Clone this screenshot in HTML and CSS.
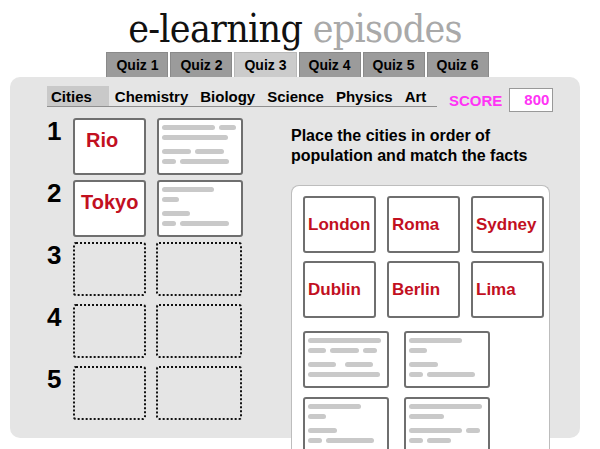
FILE: index.html
```html
<!DOCTYPE html>
<html lang="en">
<head>
    <meta charset="UTF-8">
    <meta name="viewport" content="width=device-width, initial-scale=1.0">
    <title>e-learning episodes</title>
    <link rel="stylesheet" href="styles.css">
</head>
<body>
    <div class="page">
        <h1 class="title">e-learning <span class="light">episodes</span></h1>

        <div class="quiz-tabs">
            <div class="tab">Quiz 1</div>
            <div class="tab">Quiz 2</div>
            <div class="tab active">Quiz 3</div>
            <div class="tab">Quiz 4</div>
            <div class="tab">Quiz 5</div>
            <div class="tab">Quiz 6</div>
        </div>

        <div class="panel">
            <div class="topbar">
                <div class="subjects">
                    <span class="subject current">Cities</span>
                    <span class="subject">Chemistry</span>
                    <span class="subject">Biology</span>
                    <span class="subject">Science</span>
                    <span class="subject">Physics</span>
                    <span class="subject">Art</span>
                </div>
                <div class="score">
                    <span class="score-label">SCORE</span>
                    <span class="score-box">800</span>
                </div>
            </div>

            <div class="content">
                <!-- answer slots -->
                <div class="answers">
                    <div class="row">
                        <span class="num">1</span>
                        <div class="card city indent">Rio</div>
                        <div class="card facts">
                            <div class="grp">
                                <div class="line"><i class="w53"></i><i class="w17"></i></div>
                                <div class="line"><i class="w66"></i></div>
                            </div>
                            <div class="grp">
                                <div class="line"><i class="w29"></i><i class="w29"></i></div>
                                <div class="line"><i class="w14"></i><i class="w49"></i></div>
                            </div>
                        </div>
                    </div>
                    <div class="row">
                        <span class="num">2</span>
                        <div class="card city">Tokyo</div>
                        <div class="card facts">
                            <div class="grp">
                                <div class="line"><i class="w52"></i></div>
                                <div class="line"><i class="w17"></i></div>
                            </div>
                            <div class="grp">
                                <div class="line"><i class="w28"></i></div>
                                <div class="line"><i class="w14"></i><i class="w49"></i></div>
                            </div>
                        </div>
                    </div>
                    <div class="row">
                        <span class="num">3</span>
                        <div class="slot city-slot"></div>
                        <div class="slot facts-slot"></div>
                    </div>
                    <div class="row">
                        <span class="num">4</span>
                        <div class="slot city-slot"></div>
                        <div class="slot facts-slot"></div>
                    </div>
                    <div class="row">
                        <span class="num">5</span>
                        <div class="slot city-slot"></div>
                        <div class="slot facts-slot"></div>
                    </div>
                </div>

                <!-- pieces to drag -->
                <div class="pool-area">
                    <p class="prompt">Place the cities in order of<br>population and match the facts</p>
                    <div class="pool">
                        <div class="pool-cities">
                            <div class="card city small">London</div>
                            <div class="card city small">Roma</div>
                            <div class="card city small">Sydney</div>
                            <div class="card city small">Dublin</div>
                            <div class="card city small">Berlin</div>
                            <div class="card city small">Lima</div>
                        </div>
                        <div class="pool-facts">
                            <div class="card facts">
                                <div class="grp">
                                    <div class="line"><i class="w73"></i></div>
                                    <div class="line"><i class="w18"></i><i class="w29"></i><i class="w14"></i></div>
                                </div>
                                <div class="grp">
                                    <div class="line"><i class="w28"></i><i class="w28 apart"></i></div>
                                    <div class="line"><i class="w72"></i></div>
                                </div>
                            </div>
                            <div class="card facts">
                                <div class="grp">
                                    <div class="line"><i class="w53"></i></div>
                                    <div class="line"><i class="w18"></i></div>
                                </div>
                                <div class="grp">
                                    <div class="line"><i class="w29"></i></div>
                                    <div class="line"><i class="w14"></i><i class="w48"></i></div>
                                </div>
                            </div>
                            <div class="card facts">
                                <div class="grp">
                                    <div class="line"><i class="w53"></i></div>
                                    <div class="line"><i class="w18"></i></div>
                                </div>
                                <div class="grp">
                                    <div class="line"><i class="w29"></i></div>
                                    <div class="line"><i class="w14"></i><i class="w48"></i></div>
                                </div>
                            </div>
                            <div class="card facts">
                                <div class="grp">
                                    <div class="line"><i class="w73"></i></div>
                                    <div class="line"><i class="w35"></i></div>
                                </div>
                                <div class="grp">
                                    <div class="line"><i class="w53"></i><i class="w14"></i></div>
                                    <div class="line"><i class="w14"></i><i class="w24"></i></div>
                                </div>
                            </div>
                        </div>
                    </div>
                </div>
            </div>
        </div>
    </div>
</body>
</html>
```

FILE: styles.css
```css
body {
    margin: 0;
    background: #fff;
    font-family: "Liberation Sans", Arial, sans-serif;
    color: #000;
}
.page {
    width: 570px;
    height: 449px;
    margin-left: 10px;
    overflow: hidden;
}

/* header */
.title {
    margin: 0;
    padding-top: 6px;
    height: 46px;
    line-height: 46px;
    text-align: center;
    font-family: "DejaVu Serif Condensed", "DejaVu Serif", serif;
    font-size: 39px;
    font-weight: normal;
    letter-spacing: -0.7px;
    color: #111;
}
.title .light {
    color: #a9a9a9;
}
.quiz-tabs {
    display: flex;
    justify-content: center;
    gap: 2px;
    padding-left: 5px;
    height: 25px;
}
.tab {
    padding: 0 9px;
    line-height: 24px;
    font-size: 14px;
    font-weight: bold;
    background: #9b9b9b;
    border: 1px solid #8a8a8a;
    border-bottom: none;
}
.tab.active {
    background: #cbcbcb;
    border-color: #b9b9b9;
}

/* main panel */
.panel {
    height: 361px;
    box-sizing: border-box;
    padding: 9px 0 0 37px;
    background: #e5e5e5;
    border-radius: 10px;
}
.topbar {
    display: flex;
    align-items: flex-start;
    height: 21px;
}
.subjects {
    display: flex;
    width: 390px;
    height: 21px;
    border-bottom: 1px solid #8f8f8f;
    box-sizing: border-box;
}
.subject {
    padding: 0 6px;
    line-height: 21px;
    font-size: 15px;
    font-weight: bold;
}
.subject.current {
    padding: 0 17px 0 4px;
    background: #c9c9c9;
}
.score {
    display: flex;
    align-items: center;
    margin-left: 12px;
    margin-top: 2px;
    font-size: 15px;
    font-weight: bold;
    color: #ff33f5;
}
.score-box {
    width: 44px;
    height: 24px;
    line-height: 22px;
    margin-left: 7px;
    padding-right: 3px;
    box-sizing: border-box;
    text-align: right;
    background: #fff;
    border: 1px solid #999;
}

.content {
    display: flex;
    margin-top: 11px;
}

/* answer rows */
.answers {
    display: flex;
    flex-direction: column;
    gap: 5px;
    width: 196px;
}
.row {
    display: flex;
    align-items: flex-start;
    height: 57px;
}
.num {
    width: 26px;
    font-size: 26px;
    line-height: 26px;
    font-weight: bold;
}

/* cards */
.card {
    box-sizing: border-box;
    height: 57px;
    background: #fff;
    border: 2px solid #6f6f6f;
    border-radius: 3px;
}
.city {
    width: 73px;
    padding: 8px 0 0 6px;
    font-size: 20px;
    line-height: 24px;
    font-weight: bold;
    color: #c2101f;
}
.city.indent {
    padding-left: 11px;
}
.city.small {
    display: flex;
    align-items: center;
    padding: 0 0 0 3px;
    font-size: 17px;
}
.facts {
    width: 86px;
    margin-left: 11px;
    padding: 5px 3px 0;
}
.grp + .grp {
    margin-top: 9px;
}
.line {
    display: flex;
    gap: 4px;
    height: 5px;
}
.line + .line {
    margin-top: 5px;
}
.line i {
    display: block;
    height: 5px;
    border-radius: 3px;
    background: #c9c9c9;
}
.line i.apart {
    margin-left: 5px;
}
.w14 { width: 14px; }
.w17 { width: 17px; }
.w18 { width: 18px; }
.w24 { width: 24px; }
.w28 { width: 28px; }
.w29 { width: 29px; }
.w35 { width: 35px; }
.w48 { width: 48px; }
.w49 { width: 49px; }
.w52 { width: 52px; }
.w53 { width: 53px; }
.w66 { width: 66px; }
.w72 { width: 72px; }
.w73 { width: 73px; }

.slot {
    box-sizing: border-box;
    height: 54px;
    border: 2px dotted #111;
    border-radius: 3px;
}
.city-slot {
    width: 73px;
}
.facts-slot {
    width: 86px;
    margin-left: 10px;
}

/* right side */
.pool-area {
    margin-left: 48px;
    width: 259px;
}
.prompt {
    margin: 8px 0 0;
    font-size: 16px;
    line-height: 20px;
    font-weight: bold;
}
.pool {
    margin-top: 19px;
    height: 264px;
    box-sizing: border-box;
    padding: 10px 0 0 11px;
    background: #fff;
    border: 1px solid #bdbdbd;
    border-bottom: none;
    border-radius: 8px 8px 0 0;
    overflow: hidden;
}
.pool-cities {
    display: grid;
    grid-template-columns: repeat(3, 73px);
    column-gap: 11px;
    row-gap: 8px;
}
.pool-facts {
    display: grid;
    grid-template-columns: repeat(2, 86px);
    column-gap: 15px;
    row-gap: 9px;
    margin-top: 13px;
}
.pool-facts .facts {
    margin-left: 0;
}
```
